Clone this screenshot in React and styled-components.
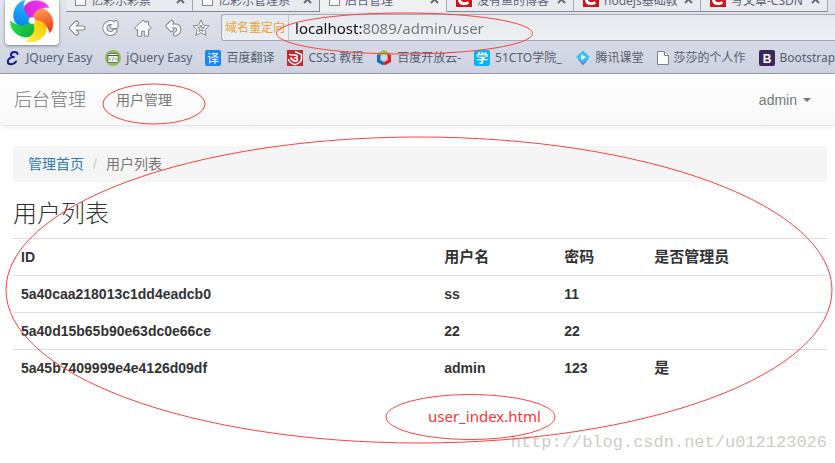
import React, { useState } from 'react'
import styled, { createGlobalStyle, css } from 'styled-components'

const uiFont = '"Noto Sans", "Noto Sans CJK SC", sans-serif'
const pageFont = '"Liberation Sans", "Noto Sans CJK SC", sans-serif'

const GlobalStyle = createGlobalStyle`
* { box-sizing: border-box; }
body {
    margin: 0;
    background: #fff;
    font-family: ${pageFont};
    font-size: 14px;
    line-height: 20px;
    color: #333;
}
button, input {
    font: inherit;
    color: inherit;
    border: 0;
    padding: 0;
    background: none;
    outline: none;
}
a { text-decoration: none; }
`

const Screen = styled.div`
position: relative;
min-height: 100vh;
overflow: hidden;
`

/* ---------- browser chrome ---------- */

const Chrome = styled.header`
font-family: ${uiFont};
background: linear-gradient(#e2e5ec, #ced2e1);
border-bottom: 1px solid #9c9fb0;
`

const TabStrip = styled.nav`
display: flex;
height: 12px;
padding-left: 66px;
overflow: hidden;
`

const TabItem = styled.div`
display: flex;
flex: 0 0 auto;
align-items: flex-end;
justify-content: space-between;
width: 127px;
height: 12px;
padding: 0 7px 4px 9px;
border-right: 1px solid #a4a7ae;
border-bottom: 1px solid #85888f;
background: #e9ebf0;
${props => props.$active && css`
    background: #eef0f4;
    border-bottom-color: #eef0f4;
    box-shadow: -1px 0 0 #85888f;
`}
`

const TabLink = styled.a`
display: flex;
align-items: flex-end;
gap: 5px;
font-size: 12px;
line-height: 12px;
color: #5c6474;
white-space: nowrap;
`

const TabClose = styled.button`
display: flex;
height: 12px;
`

const Toolbar = styled.div`
display: flex;
align-items: center;
height: 31px;
padding-left: 60px;
`

const ToolButton = styled.button`
display: flex;
justify-content: center;
width: ${props => props.$narrow ? 28 : 33}px;
flex: 0 0 auto;
`

const AddressBar = styled.label`
display: flex;
flex: 1;
align-items: center;
height: 27px;
margin-left: 6px;
border: 1px solid #a6aab6;
border-right: 0;
border-radius: 3px 0 0 3px;
background: linear-gradient(#e6eaee, #edf0f3);
`

const AddressHint = styled.span`
padding: 0 3px;
border-right: 1px solid #c3c6cf;
font-size: 12px;
line-height: 25px;
color: #efa32b;
`

/* host part is dark, the rest of the address is grey */
const AddressInput = styled.input`
flex: 1;
min-width: 0;
height: 25px;
margin-left: 6px;
font-size: 15px;
background: linear-gradient(90deg, #111 67px, #6f7276 67px);
background-clip: text;
-webkit-text-fill-color: transparent;
`

const Bookmarks = styled.nav`
display: flex;
align-items: center;
gap: 13px;
height: 30px;
padding-left: 5px;
overflow: hidden;
`

const Bookmark = styled.a`
display: flex;
flex: 0 0 auto;
align-items: center;
gap: 5px;
font-size: 12px;
line-height: 16px;
color: #566070;
white-space: nowrap;
`

const LogoTile = styled.div`
position: absolute;
top: 0;
left: 5px;
display: flex;
justify-content: center;
width: 54px;
height: 45px;
border-radius: 0 0 4px 4px;
background: #fdfdfe;
box-shadow: 0 1px 3px rgba(60, 65, 85, 0.6);
`

/* ---------- admin page ---------- */

const Navbar = styled.nav`
display: flex;
align-items: center;
height: 52px;
padding: 0 15px 0 14px;
border-bottom: 1px solid #e7e7e7;
border-radius: 4px;
background: linear-gradient(#fff, #f8f8f8);
box-shadow: 0 1px 5px rgba(0, 0, 0, 0.08);
color: #777;
`

const Brand = styled.a`
margin-right: 30px;
font-size: 18px;
font-weight: 300;
color: inherit;
`

const NavLink = styled.a`
color: inherit;
`

const UserMenu = styled.button`
display: flex;
align-items: center;
gap: 6px;
margin-left: auto;
margin-right: 9px;
`

const Caret = styled.span`
border-top: 4px solid;
border-left: 4px solid transparent;
border-right: 4px solid transparent;
`

const Content = styled.main`
padding: 20px 8px 0 13px;
`

const Breadcrumb = styled.ol`
display: flex;
margin: 0;
padding: 8px 15px;
border-radius: 4px;
background: #f5f5f5;
list-style: none;
`

const Crumb = styled.li`
color: #777;
a { color: #337ab7; }
& + &::before {
    content: '/';
    padding: 0 9px;
    color: #ccc;
}
`

const Title = styled.h3`
margin: 18px 0 10px;
font-size: 24px;
font-weight: 300;
line-height: 28px;
`

const UserTable = styled.table`
width: 100%;
table-layout: fixed;
border-collapse: collapse;
text-align: left;
`

const Cell = styled.th`
padding: 8px;
border-top: 1px solid #ddd;
font-size: ${props => props.$large ? 15 : 14}px;
line-height: 20px;
font-weight: bold;
`

const Col = styled.col`
width: ${props => props.$width};
`

/* ---------- notes drawn over the page ---------- */

const Ellipses = styled.svg`
position: absolute;
top: 0;
left: 0;
pointer-events: none;
`

const Note = styled.span`
position: absolute;
top: 406px;
left: 428px;
font-family: ${uiFont};
font-size: 15px;
color: #f33;
`

const Watermark = styled.span`
position: absolute;
top: 433px;
right: 8px;
font-family: "Liberation Mono", monospace;
font-size: 17px;
color: #cdcdc8;
`

const PageIcon = () => (
    <svg width="11" height="13" viewBox="0 0 11 13">
        <rect x="0.5" y="0.5" width="10" height="11" fill="#f8f8f6" stroke="#85888c" />
    </svg>
)

const CsdnIcon = () => (
    <svg width="16" height="16" viewBox="0 0 16 16">
        <rect width="16" height="16" fill="#c8161d" />
        <path d="M13 4.500C7 2 3.500 5 3.500 8.500S7 14 12.500 11.500" fill="none" stroke="#fff" strokeWidth="3" />
    </svg>
)

// every toolbar glyph is a grey stroke with a thinner white one on top
const Outlined = ({ d, size = 18 }) => (
    <svg width={size} height="18" viewBox={`0 0 ${size} 18`} fill="none" strokeLinejoin="round" strokeLinecap="round">
        <path d={d} stroke="#85878c" strokeWidth="5" />
        <path d={d} stroke="#fbfbfb" strokeWidth="3" />
    </svg>
)

const HomeIcon = () => (
    <svg width="18" height="18" viewBox="0 0 18 18" fill="#fbfbfb" stroke="#85878c" strokeLinejoin="round">
        <path d="M9 1L.8 8.800l1.900 2.200 .8-.6v6.800h4.200v-5h2.600v5h4.200v-6.800l.8.6 1.900-2.200L14.500 6V2.500H12v1.200z" />
    </svg>
)

const StarIcon = () => (
    <svg width="18" height="18" viewBox="0 0 18 18" stroke="#85878c" strokeLinejoin="round">
        <path d="M9 1l2.400 5.200 5.700.7-4.200 3.900 1.100 5.700L9 13.700l-5 2.800 1.100-5.700L.9 6.900l5.700-.7z" fill="#fbfbfb" />
        <path d="M9 6l1 2.200 2.300.3-1.700 1.600.4 2.300L9 11.300l-2 1.100.4-2.300-1.700-1.600L8 8.200z" fill="#d5d8e0" />
    </svg>
)

const blades = [
    ['#d81fe0', '#f542ee'],
    ['#ff9a4a', '#ee3418'],
    ['#f8c800', '#fff04a'],
    ['#14b040', '#22e046'],
    ['#0a86ea', '#28b8ff'],
]

const Pinwheel = () => (
    <svg width="44" height="42" viewBox="-22 -20.500 44 42">
        <defs>
            {blades.map(([from, to], i) => (
                <linearGradient key={i} id={'blade' + i} x1="0" y1="0" x2="1" y2="0">
                    <stop offset="0" stopColor={from} />
                    <stop offset="1" stopColor={to} />
                </linearGradient>
            ))}
        </defs>
        {blades.map((_, i) => (
            <path
                key={i}
                d="M-2.500 -2C-8 -5 -9.500 -11 -7 -15C-2 -21.500 12 -22 17 -13C14 -13.300 11 -12.800 8 -11C5 -9 2.500 -6 1.500 -2.500Z"
                fill={`url(#blade${i})`}
                stroke={`url(#blade${i})`}
                strokeWidth="0.500"
                transform={`rotate(${i * 72})`}
            />
        ))}
        <circle r="3.300" fill="#fff" />
    </svg>
)

const EasyIcon = () => (
    <svg width="16" height="16" viewBox="0 0 16 16" fill="none" stroke="#151a94" strokeWidth="2" strokeLinecap="round">
        <path d="M12.500 4C13 1.500 6.500 1 6 4.500C5.800 6.500 7.500 7.200 9.500 7C5.500 7 2.500 9 2.800 11.800C3.200 15.500 9.500 14.500 11 11.500" />
    </svg>
)

const CodeIcon = () => (
    <svg width="16" height="16" viewBox="0 0 16 16">
        <circle cx="8" cy="8" r="8" fill="#8cc152" />
        <rect x="3" y="3.500" width="10" height="9" rx="1" fill="#fff" stroke="#4d5a4d" strokeWidth="0.800" />
        <path d="M3 5.500h10" stroke="#4d5a4d" />
        <path d="M6 7.500L4.500 9 6 10.500M10 7.500L11.500 9 10 10.500M8.600 7.300L7.400 10.700" fill="none" stroke="#4d5a4d" strokeWidth="0.800" />
    </svg>
)

const TranslateIcon = () => (
    <svg width="16" height="16" viewBox="0 0 16 16">
        <rect width="16" height="16" rx="2" fill="#1687f5" />
        <text x="8" y="12.500" textAnchor="middle" fontSize="12" fontFamily="Noto Sans CJK SC" fill="#fff">译</text>
    </svg>
)

const CssIcon = () => (
    <svg width="16" height="16" viewBox="0 0 16 16" fill="none">
        <rect width="16" height="16" fill="#c4262e" />
        <path d="M8 1.500L14.500 4.500V8.500C14.500 11.500 11.500 13.500 8 14.800C4.500 13.500 1.500 11.500 1.500 9" stroke="#fff" strokeWidth="1.500" />
        <path d="M2 4.500L9 5.200C11 5.500 10.500 7.800 8.500 7.800H7M8.500 7.800C11 8 11 11.200 8.500 11.200C6.500 11.200 5 10 3.500 7.500" stroke="#fff" strokeWidth="1.600" />
    </svg>
)

const CloudIcon = () => (
    <svg width="16" height="16" viewBox="0 0 16 16" fill="none" strokeWidth="3.400">
        <path d="M2.500 4.800L8 1.900L13.500 4.800" stroke="#8cc63f" />
        <path d="M2.700 4.500V11L8 14" stroke="#1470b8" />
        <path d="M13.300 4.500V11L8 14" stroke="#d9232e" />
    </svg>
)

const SchoolIcon = () => (
    <svg width="16" height="16" viewBox="0 0 16 16">
        <rect width="16" height="16" rx="2" fill="#00b7ff" />
        <text x="8" y="12.500" textAnchor="middle" fontSize="12" fontWeight="bold" fontFamily="Noto Sans CJK SC" fill="#fff">学</text>
    </svg>
)

const TencentIcon = () => (
    <svg width="16" height="16" viewBox="0 0 16 16">
        <path d="M2.500 9L8 15.500L13.500 9z" fill="#7277f2" />
        <path d="M8 .5L15 7L8 13L1 7z" fill="#32c2f5" />
        <path d="M6.300 4.300L11 7.200L6.300 10z" fill="#fff" />
    </svg>
)

const FileIcon = () => (
    <svg width="12" height="14" viewBox="0 0 12 14" fill="#fafafa" stroke="#7d8086">
        <path d="M.5.5h7l4 4v9H.5z" />
        <path d="M7.500.5v4h4" />
    </svg>
)

const BootstrapIcon = () => (
    <svg width="16" height="16" viewBox="0 0 16 16">
        <rect width="16" height="16" rx="2" fill="#3e2562" />
        <text x="8" y="12.500" textAnchor="middle" fontSize="12" fontWeight="bold" fontFamily="Liberation Sans" fill="#fff">B</text>
    </svg>
)

const tabs = [
    { label: '亿彩乐彩票', Icon: PageIcon },
    { label: '亿彩乐管理系', Icon: PageIcon },
    { label: '后台管理', Icon: PageIcon, active: true },
    { label: '没有鱼的博客', Icon: CsdnIcon },
    { label: 'nodejs基础教', Icon: CsdnIcon },
    { label: '写文章-CSDN', Icon: CsdnIcon },
]

const bookmarks = [
    { label: 'JQuery Easy', Icon: EasyIcon },
    { label: 'jQuery Easy', Icon: CodeIcon },
    { label: '百度翻译', Icon: TranslateIcon },
    { label: 'CSS3 教程', Icon: CssIcon },
    { label: '百度开放云-', Icon: CloudIcon },
    { label: '51CTO学院_', Icon: SchoolIcon },
    { label: '腾讯课堂', Icon: TencentIcon },
    { label: '莎莎的个人作', Icon: FileIcon },
    { label: 'Bootstrap', Icon: BootstrapIcon },
]

const users = [
    { id: '5a40caa218013c1dd4eadcb0', name: 'ss', password: '11', admin: '' },
    { id: '5a40d15b65b90e63dc0e66ce', name: '22', password: '22', admin: '' },
    { id: '5a45b7409999e4e4126d09df', name: 'admin', password: '123', admin: '是' },
]

const App = () => {
    const [url, setUrl] = useState('localhost:8089/admin/user')

    return (
        <Screen>
            <GlobalStyle />
            <Chrome>
                <TabStrip>
                    {tabs.map(({ label, Icon, active }) => (
                        <TabItem key={label} $active={active}>
                            <TabLink href="#"><Icon />{label}</TabLink>
                            <TabClose aria-label="close">
                                <svg width="9" height="9" viewBox="0 0 9 9" stroke="#666a72" strokeWidth="2">
                                    <path d="M1 1l7 7M8 1L1 8" />
                                </svg>
                            </TabClose>
                        </TabItem>
                    ))}
                </TabStrip>
                <Toolbar>
                    <ToolButton aria-label="back"><Outlined d="M15 9H4M8.500 4L3.500 9l5 5" /></ToolButton>
                    <ToolButton aria-label="reload"><Outlined d="M12.500 4.500A5.500 5.500 0 1 0 14 12M15 3.500V7.500H11" /></ToolButton>
                    <ToolButton aria-label="home"><HomeIcon /></ToolButton>
                    <ToolButton aria-label="undo" $narrow><Outlined size={17} d="M6.500 3.500L3 7L6.500 10.500M3.500 7H10C15 7 15 13 10.500 15" /></ToolButton>
                    <ToolButton aria-label="favourite" $narrow><StarIcon /></ToolButton>
                    <AddressBar>
                        <AddressHint>域名重定向</AddressHint>
                        <AddressInput value={url} onChange={event => setUrl(event.target.value)} />
                    </AddressBar>
                </Toolbar>
                <Bookmarks>
                    {bookmarks.map(({ label, Icon }) => (
                        <Bookmark key={label} href="#"><Icon />{label}</Bookmark>
                    ))}
                </Bookmarks>
                <LogoTile><Pinwheel /></LogoTile>
            </Chrome>

            <Navbar>
                <Brand href="#">后台管理</Brand>
                <NavLink href="#">用户管理</NavLink>
                <UserMenu>admin<Caret /></UserMenu>
            </Navbar>

            <Content>
                <Breadcrumb>
                    <Crumb><a href="#">管理首页</a></Crumb>
                    <Crumb>用户列表</Crumb>
                </Breadcrumb>
                <Title>用户列表</Title>
                <UserTable>
                    <colgroup>
                        <Col $width="52%" />
                        <Col $width="120px" />
                        <Col $width="90px" />
                        <Col $width="auto" />
                    </colgroup>
                    <thead>
                        <tr>
                            <Cell>ID</Cell>
                            <Cell $large>用户名</Cell>
                            <Cell $large>密码</Cell>
                            <Cell $large>是否管理员</Cell>
                        </tr>
                    </thead>
                    <tbody>
                        {users.map(user => (
                            <tr key={user.id}>
                                <Cell as="td">{user.id}</Cell>
                                <Cell as="td">{user.name}</Cell>
                                <Cell as="td">{user.password}</Cell>
                                <Cell as="td" $large>{user.admin}</Cell>
                            </tr>
                        ))}
                    </tbody>
                </UserTable>
            </Content>

            <Watermark>http://blog.csdn.net/u012123026</Watermark>
            <Note>user_index.html</Note>
            <Ellipses width="835" height="463" fill="none" stroke="#ff4040">
                <ellipse cx="404.500" cy="33.500" rx="128" ry="20.500" />
                <ellipse cx="154" cy="104" rx="51" ry="20" />
                <ellipse cx="419" cy="290" rx="413" ry="153" />
                <ellipse cx="470.500" cy="417" rx="84.500" ry="22.500" />
            </Ellipses>
        </Screen>
    )
}

export default App
